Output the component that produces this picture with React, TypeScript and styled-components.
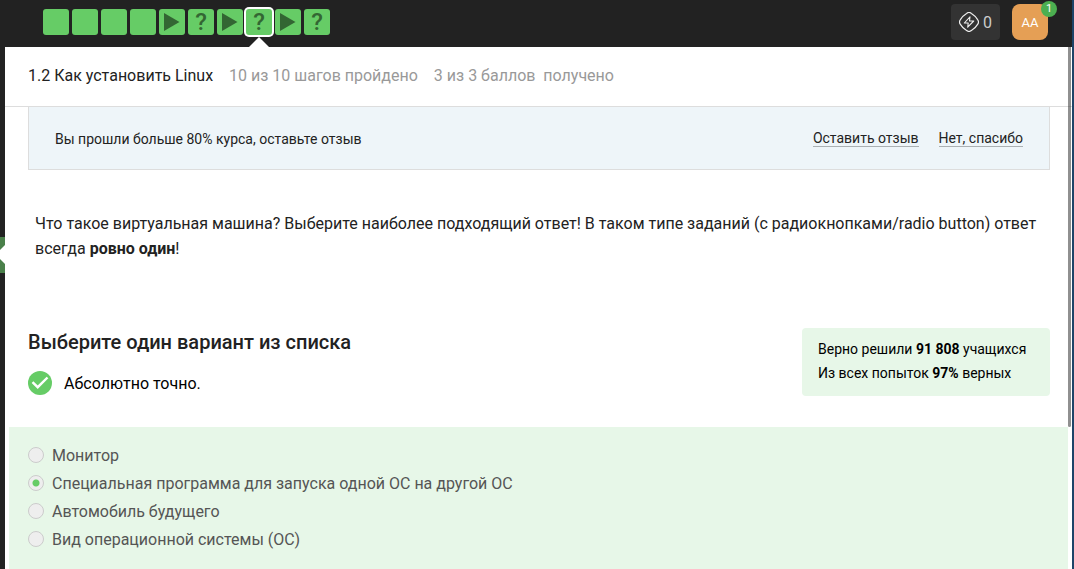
import React, { useState } from "react";
import styled, { createGlobalStyle, css } from "styled-components";

const GlobalStyle = createGlobalStyle`
  *, *::before, *::after { box-sizing: border-box; }
  body {
    margin: 0;
    background: #fff;
    color: #222;
    font-family: Roboto, "Noto Sans", sans-serif;
    font-size: 16px;
  }
  button { font: inherit; border: 0; padding: 0; cursor: pointer; }
  h1, h2, p { margin: 0; }
`;

const Page = styled.div`
  position: relative;
  display: flex;
  flex-direction: column;
  min-height: 100vh;
  border-right: 2px solid #1e4468;
`;

const TopBar = styled.header`
  display: flex;
  justify-content: space-between;
  height: 47px;
  padding: 0 24px 0 43px;
  background: #222;
`;

const Steps = styled.nav`
  display: flex;
  gap: 3px;
  padding-top: 9px;
`;

const Step = styled.button<{ $active?: boolean }>`
  position: relative;
  display: flex;
  align-items: center;
  justify-content: center;
  width: 26px;
  height: 26px;
  border-radius: 3px;
  background: #66cc66;
  color: #336633;
  font-size: 24px;
  font-weight: 500;
  line-height: 26px;
  ${(p) =>
    p.$active &&
    css`
      box-shadow: 0 0 0 2px #fff;
      &::after {
        content: "";
        position: absolute;
        top: 28px;
        left: 3px;
        border: 10px solid transparent;
        border-top: 0;
        border-bottom-color: #fff;
      }
    `}
`;

const Account = styled.div`
  display: flex;
  gap: 12px;
  padding-top: 4px;
`;

const Energy = styled.button`
  display: flex;
  align-items: center;
  gap: 4px;
  height: 36px;
  padding: 0 8px;
  border-radius: 4px;
  background: #333;
  color: #ccc;
`;

const Avatar = styled.button`
  position: relative;
  width: 36px;
  height: 36px;
  border-radius: 8px;
  background: #e59f55;
  color: #fff;
  font-size: 13px;
`;

const Badge = styled.span`
  position: absolute;
  top: -3px;
  right: -9px;
  width: 16px;
  height: 16px;
  border-radius: 50%;
  background: #4caf50;
  font-size: 11px;
  line-height: 16px;
`;

const Body = styled.div`
  display: flex;
  flex: 1;
`;

const Rail = styled.aside`
  width: 5px;
  padding-top: 190px;
  background: #222;
`;

const RailMarker = styled.svg`
  display: block;
  width: 5px;
  height: 36px;
`;

const Main = styled.main`
  flex: 1;
  min-width: 0;
  display: flex;
  flex-direction: column;
`;

const LessonBar = styled.div`
  display: flex;
  align-items: center;
  gap: 16px;
  height: 60px;
  padding: 0 23px 3px;
  border-bottom: 1px solid #ddd;
  color: #999;
`;

const LessonTitle = styled.h1`
  color: #222;
  font-size: 16px;
  font-weight: 400;
`;

const Content = styled.div`
  padding: 0 22px 31px 23px;
`;

const Banner = styled.div`
  display: flex;
  align-items: center;
  gap: 20px;
  height: 63px;
  padding: 1px 26px 0;
  border: 1px solid #ddd;
  border-top: 0;
  background: #eef5f9;
  font-size: 14px;
`;

const BannerText = styled.p`
  flex: 1;
`;

const BannerLink = styled.a`
  border-bottom: 1px solid #aab0b3;
  color: #222;
  line-height: 16px;
  text-decoration: none;
`;

const Question = styled.p`
  padding: 41px 7px 67px;
  line-height: 25px;
`;

const Result = styled.section`
  display: flex;
  justify-content: space-between;
  align-items: flex-start;
`;

const Heading = styled.h2`
  font-size: 20px;
  font-weight: 500;
  line-height: 28px;
`;

const Verdict = styled.p`
  display: flex;
  align-items: center;
  gap: 12px;
  padding-top: 15px;
  color: #000;
`;

const Stats = styled.div`
  min-width: 248px;
  padding: 9px 16px 11px;
  border-radius: 4px;
  background: #e7f7e8;
  color: #000;
  font-size: 14px;
  line-height: 24px;
`;

const Options = styled.fieldset`
  flex: 1;
  min-width: 0;
  margin: 0 4px;
  padding: 15px 19px;
  border: 0;
  background: #e7f7e8;
`;

const Option = styled.label`
  display: flex;
  align-items: center;
  gap: 8px;
  color: #555;
  line-height: 28px;
`;

const Radio = styled.input`
  appearance: none;
  width: 16px;
  height: 16px;
  margin: 0 0 2px;
  border: 1px solid #ccc;
  border-radius: 50%;
  background: #eee;
  &:checked {
    background: radial-gradient(circle, #66cc66 3px, #eee 4px);
  }
`;

const ScrollThumb = styled.div`
  position: absolute;
  top: 47px;
  right: 1px;
  width: 3px;
  height: 380px;
  border-radius: 0 0 2px 2px;
  background: rgba(34, 34, 34, 0.5);
`;

const steps = ["text", "text", "text", "text", "video", "quiz", "video", "quiz", "video", "quiz"];
const activeStep = 7;

const options = [
  "Монитор",
  "Специальная программа для запуска одной ОС на другой ОС",
  "Автомобиль будущего",
  "Вид операционной системы (ОС)",
];

const PlayIcon = () => (
  <svg width="26" height="26" viewBox="0 0 26 26" aria-hidden="true">
    <path d="M5 4v18L20.5 13z" fill="#336633" />
  </svg>
);

const EnergyIcon = () => (
  <svg width="20" height="20" viewBox="0 0 20 20" fill="none" stroke="#eee" aria-hidden="true">
    <path
      d="M7.6 1.4Q10-.4 12.4 1.4Q16.3 3.7 18.6 7.6Q20.4 10 18.6 12.4Q16.3 16.3 12.4 18.6Q10 20.4 7.6 18.6Q3.7 16.3 1.4 12.4Q-.4 10 1.4 7.6Q3.7 3.7 7.6 1.4Z"
      strokeWidth="1.2"
    />
    <path d="M11 4.8L5.3 11h3.9L8.7 15.2L14.7 9h-4.2z" strokeWidth="1.1" strokeLinejoin="round" />
  </svg>
);

const CheckIcon = () => (
  <svg width="24" height="24" viewBox="0 0 24 24" aria-hidden="true">
    <circle cx="12" cy="12" r="12" fill="#66cc66" />
    <path d="M4.5 11.2l5.2 5L19.5 6.5" fill="none" stroke="#fff" strokeWidth="2.4" />
  </svg>
);

export default function App() {
  const [selected, setSelected] = useState(1);

  return (
    <>
      <GlobalStyle />
      <Page>
        <TopBar>
          <Steps aria-label="Шаги урока">
            {steps.map((kind, i) => (
              <Step key={i} $active={i === activeStep} aria-label={`Шаг ${i + 1}`}>
                {kind === "video" && <PlayIcon />}
                {kind === "quiz" && "?"}
              </Step>
            ))}
          </Steps>
          <Account>
            <Energy>
              <EnergyIcon />
              <span>0</span>
            </Energy>
            <Avatar>
              AA
              <Badge>1</Badge>
            </Avatar>
          </Account>
        </TopBar>
        <Body>
          <Rail>
            <RailMarker viewBox="0 0 5 36" aria-hidden="true">
              <path d="M0 0h5v36H0z" fill="#4a804a" />
              <path d="M5 8L0 13v9l5 5z" fill="#fff" />
            </RailMarker>
          </Rail>
          <Main>
            <LessonBar>
              <LessonTitle>1.2 Как установить Linux</LessonTitle>
              <span>10 из 10 шагов пройдено</span>
              <span>3 из 3 баллов&nbsp; получено</span>
            </LessonBar>
            <Content>
              <Banner>
                <BannerText>Вы прошли больше 80% курса, оставьте отзыв</BannerText>
                <BannerLink href="#review">Оставить отзыв</BannerLink>
                <BannerLink href="#dismiss">Нет, спасибо</BannerLink>
              </Banner>
              <Question>
                Что такое виртуальная машина? Выберите наиболее подходящий ответ! В таком типе
                заданий (с радиокнопками/radio button) ответ всегда <b>ровно один</b>!
              </Question>
              <Result>
                <div>
                  <Heading>Выберите один вариант из списка</Heading>
                  <Verdict>
                    <CheckIcon />
                    Абсолютно точно.
                  </Verdict>
                </div>
                <Stats>
                  <p>
                    Верно решили <b>91 808</b> учащихся
                  </p>
                  <p>
                    Из всех попыток <b>97%</b> верных
                  </p>
                </Stats>
              </Result>
            </Content>
            <Options aria-label="Варианты ответа">
              {options.map((text, i) => (
                <Option key={text}>
                  <Radio
                    type="radio"
                    name="answer"
                    checked={selected === i}
                    onChange={() => setSelected(i)}
                  />
                  {text}
                </Option>
              ))}
            </Options>
          </Main>
        </Body>
        <ScrollThumb />
      </Page>
    </>
  );
}
